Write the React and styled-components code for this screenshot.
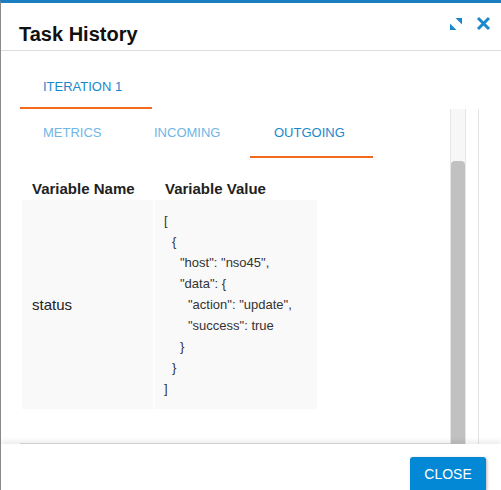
import React from "react";
import styled, { createGlobalStyle } from "styled-components";

const G = createGlobalStyle`
  html,body{margin:0;padding:0;background:#fff;}
  body{font-family:"Liberation Sans",Arial,sans-serif;}
`;
const Dialog = styled.div`
  width:501px;height:490px;box-sizing:border-box;border-left:1px solid #8a8a8a;
  border-top:3px solid #1a7fc0;display:flex;flex-direction:column;background:#fff;overflow:hidden;
`;
const Header = styled.div`
  height:48px;box-sizing:border-box;border-bottom:1px solid #ddd;display:flex;align-items:center;
  justify-content:space-between;padding:0 10px 0 18px;
`;
const Title = styled.h1`margin:0;margin-top:16px;font-size:20px;font-weight:bold;color:#111;`;
const Icons = styled.div`display:flex;gap:14px;align-items:center;align-self:flex-start;margin-top:13px;`;
const Body = styled.div`flex:1;display:flex;flex-direction:column;padding:0 0 0 19px;min-height:0;`;
const TabRow = styled.div`display:flex;`;
const Tab = styled.div`
  font-size:13px;color:${p=>p.active?"#1a88cc":"#6fb6e6"};padding:${p=>p.pad};
  border-bottom:2px solid ${p=>p.active?"#f26a1b":"transparent"};height:${p=>p.h}px;box-sizing:border-box;
  display:flex;align-items:center;width:${p=>p.w}px;
`;
const Panel = styled.div`flex:1;display:flex;min-height:0;`;
const Content = styled.div`width:430px;display:flex;flex-direction:column;border-bottom:1px solid #ddd;`;
const Track = styled.div`
  width:14px;border-left:1px solid #e6e6e6;border-right:1px solid #e6e6e6;background:#f7f7f7;
  display:flex;justify-content:center;padding-top:52px;
`;
const Thumb = styled.div`width:8px;flex:1;background:#c1c1c1;border-radius:4px 4px 0 0;`;
const Line = styled.div`width:1px;margin-left:12px;background:#e3e3e3;`;
const Table = styled.div`display:grid;grid-template-columns:131px 162px;column-gap:2px;margin-top:22px;margin-left:2px;`;
const Th = styled.div`font-size:15px;font-weight:bold;color:#222;padding:0 10px;height:20px;`;
const Td = styled.div`
  background:#f9f9f9;font-size:15px;color:#222;padding:${p=>p.pad||"0 10px"};display:flex;
  flex-direction:column;justify-content:center;height:209px;box-sizing:border-box;
`;
const Code = styled.div`font-size:13px;color:#333;line-height:21px;padding-left:${p=>p.l*8}px;white-space:pre;`;
const Footer = styled.div`
  height:46px;box-shadow:0 -3px 5px rgba(0,0,0,0.08);display:flex;justify-content:flex-end;align-items:flex-end;
  padding:0 15px 0 0;position:relative;
`;
const Btn = styled.button`
  width:76px;height:33px;background:#0288d4;color:#fff;border:none;border-radius:3px 3px 0 0;font-family:inherit;
  font-size:14px;box-shadow:1px 1px 3px rgba(0,0,0,.3);
`;

const json = [[0,"["],[1,"{"],[2,'"host": "nso45",'],[2,'"data": {'],[3,'"action": "update",'],[3,'"success": true'],[2,"}"],[1,"}"],[0,"]"]];

export default function App(){
  return <><G/><Dialog>
    <Header><Title>Task History</Title>
      <Icons>
        <svg width="12" height="12" viewBox="0 0 12 12"><path d="M5.5 0H12V6.5zM0 5.5V12H6.5z" fill="#1a88cc"/></svg>
        <svg width="15" height="15" viewBox="0 0 15 15"><path d="M2 2l11 11M13 2L2 13" stroke="#1a88cc" strokeWidth="3"/></svg>
      </Icons>
    </Header>
    <Body>
      <TabRow><Tab active h={58} w={132} pad="14px 0 0 23px">ITERATION 1</Tab></TabRow>
      <Panel>
        <Content>
          <TabRow>
            <Tab h={49} w={110} pad="0 0 0 23px">METRICS</Tab>
            <Tab h={49} w={120} pad="0 0 0 24px">INCOMING</Tab>
            <Tab active h={49} w={123} pad="0 0 0 24px">OUTGOING</Tab>
          </TabRow>
          <Table>
            <Th>Variable Name</Th><Th>Variable Value</Th>
            <Td>status</Td>
            <Td pad="0 9px">{json.map(([l,t],i)=><Code key={i} l={l}>{t}</Code>)}</Td>
          </Table>
        </Content>
        <Track><Thumb/></Track>
        <Line/>
      </Panel>
    </Body>
    <Footer><Btn>CLOSE</Btn></Footer>
  </Dialog></>;
}
